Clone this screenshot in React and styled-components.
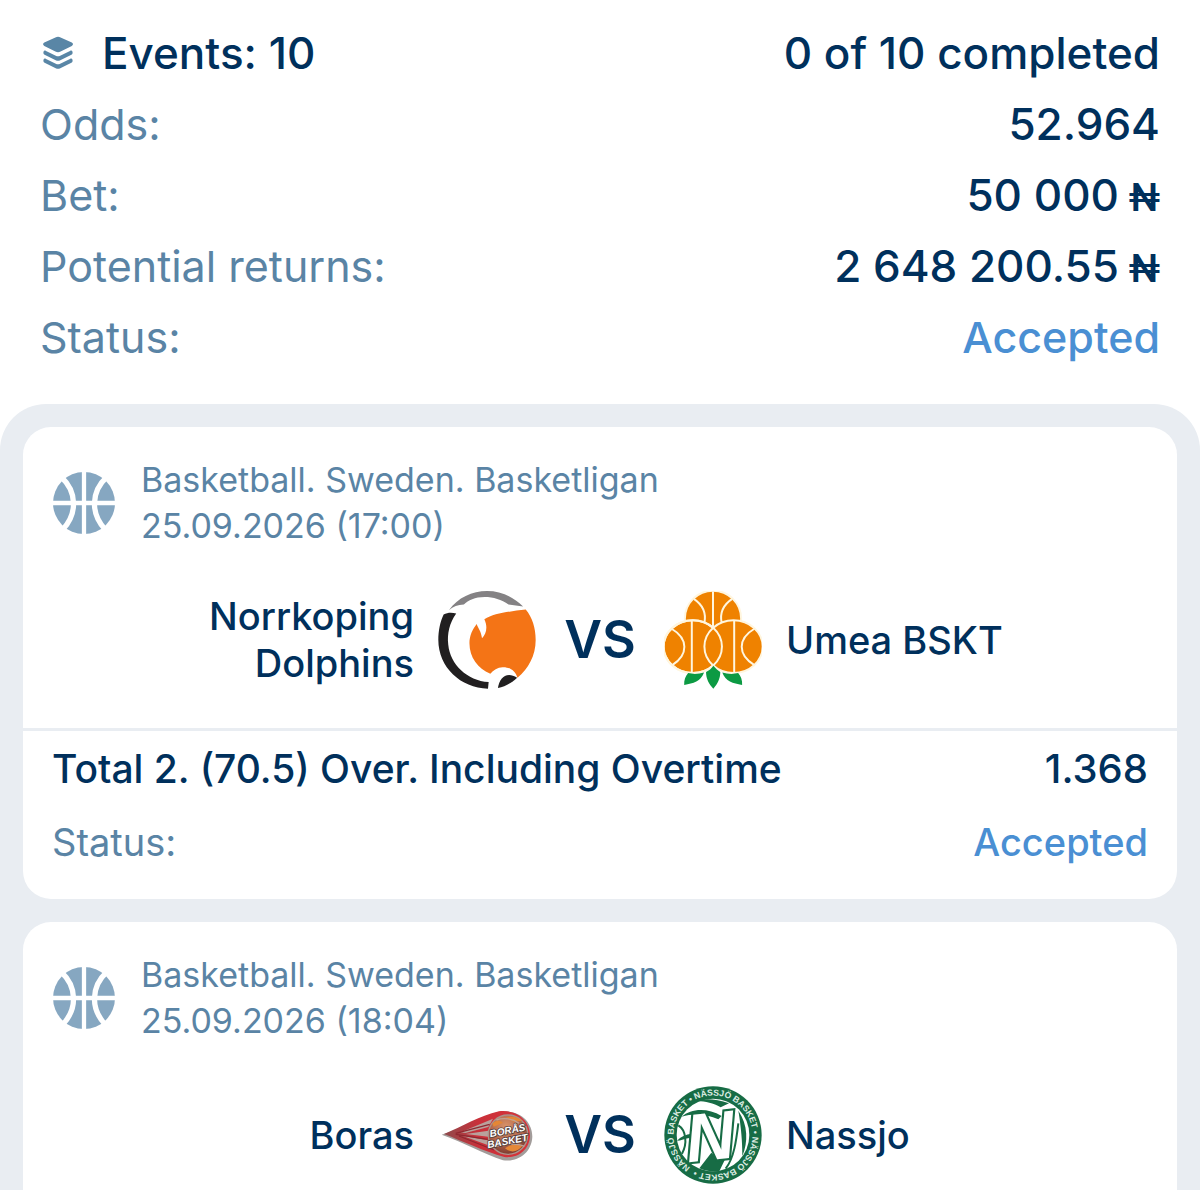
import styled, { createGlobalStyle } from 'styled-components';

const GlobalStyle = createGlobalStyle`
	* {
		box-sizing: border-box;
	}
	body {
		margin: 0;
		background: #ffffff;
		color: #00305c;
		font-family: Inter, 'Liberation Sans', sans-serif;
	}
	h1, h2, p, dl, dt, dd {
		margin: 0;
		font: inherit;
	}
	svg {
		display: block;
		flex: none;
	}
`;

const Page = styled.main`
	overflow: hidden;
	height: 100vh;
`;

const Summary = styled.dl`
	display: flex;
	flex-direction: column;
	gap: 19px;
	padding: 27px 40px 41px;
	font-size: 44px;
	line-height: 52px;
`;

const Row = styled.div`
	display: flex;
	justify-content: space-between;
	align-items: center;
	gap: 20px;
`;

const Label = styled.dt`
	display: flex;
	align-items: center;
	gap: 26px;
	color: ${({ $strong }) => ($strong ? '#00305c' : '#5a84a5')};
	font-size: ${({ $size }) => $size}px;
	font-weight: ${({ $strong }) => ($strong ? 500 : 400)};
`;

const Value = styled.dd`
	color: ${({ $accepted }) => ($accepted ? '#4a8fd3' : '#00305c')};
	font-size: ${({ $size }) => $size}px;
	font-weight: 500;
	text-align: right;
`;

const Currency = styled.span`
	font-family: Roboto, sans-serif;
	font-size: 39px;
	font-weight: 500;
	line-height: 1;
	white-space: pre;
`;

const EventList = styled.section`
	display: flex;
	flex-direction: column;
	gap: 23px;
	padding: 23px;
	border-radius: 46px 46px 0 0;
	background: #e9edf2;
`;

const Card = styled.article`
	border-radius: 28px;
	background: #ffffff;
`;

const CardHeader = styled.header`
	display: flex;
	align-items: center;
	gap: 26px;
	padding: 30px 30px 42px;
	color: #5a84a5;
	font-size: 34px;
	line-height: 46px;
`;

const Match = styled.div`
	display: grid;
	grid-template-columns: minmax(0, 1fr) 98px 128px 98px minmax(0, 1fr);
	align-items: center;
	padding: 0 30px 39px;
`;

const Team = styled.h2`
	padding: 0 24px;
	font-size: 38px;
	font-weight: 500;
	line-height: 47px;
	text-align: ${({ $side }) => ($side === 'home' ? 'right' : 'left')};
`;

const Versus = styled.span`
	font-size: 52px;
	font-weight: 600;
	line-height: 60px;
	text-align: center;
`;

const Outcome = styled.dl`
	display: flex;
	flex-direction: column;
	gap: 21px;
	padding: 12px 29px 31px;
	border-top: 3px solid #e9edf2;
	line-height: 52px;
`;

const LayersIcon = () => (
	<svg width='36' height='36' viewBox='0 0 36 36' fill='#5986a6' aria-hidden='true'>
		<path d='M15.4 2.4C17.200 1.600 18.900 1.600 20.600 2.400L31.800 7.600C33.400 8.400 33.400 10.100 31.800 11L20.600 16.600C18.900 17.500 17.200 17.500 15.400 16.600L4.300 11C2.700 10.100 2.700 8.400 4.300 7.600Z' />
		<path d='M3.600 16.500C3.900 15.500 5 15.400 6 15.900L15.800 20.800C17.300 21.500 18.700 21.500 20.200 20.800L30 15.900C31 15.400 32.100 15.500 32.400 16.500C32.900 18 32.500 19.200 31.400 19.800L20.300 25.200C18.700 26 17.300 26 15.700 25.200L4.600 19.800C3.500 19.200 3.100 18 3.600 16.500Z' />
		<path d='M3.600 24.500C3.900 23.500 5 23.400 6 23.900L15.800 28.800C17.300 29.500 18.700 29.500 20.200 28.800L30 23.900C31 23.400 32.100 23.500 32.400 24.500C32.900 26 32.500 27.200 31.400 27.800L20.300 33.200C18.700 34 17.300 34 15.700 33.200L4.600 27.800C3.500 27.200 3.100 26 3.600 24.500Z' />
	</svg>
);

const BasketballIcon = () => (
	<svg width='62' height='62' viewBox='69 63 188 188' aria-hidden='true'>
		<circle cx='163' cy='157' r='94' fill='#86a7c1' />
		<g fill='none' stroke='#ffffff'>
			<path strokeWidth='13' d='M163 60V255M66 157H260' />
			<path strokeWidth='16' d='M94 78C143 123 143 191 98 238M232 78C183 123 183 191 228 238' />
		</g>
	</svg>
);

const DolphinsLogo = () => (
	<svg width='98' height='98' viewBox='55 60 296 296' role='img' aria-label='Norrkoping Dolphins'>
		<path fill='#848284' d='M88 118C115 80 158 60 203 60C245 60 282 77 312 107L268 101C247 86 222 78 196 78C166 78 147 88 133 101C115 101 101 108 88 118Z' />
		<path fill='#211f20' d='M72 131C84 125 96 125 110 128C90 155 82 190 86 222C92 282 143 330 208 335L206 355C123 353 56 290 56 208C56 179 62 152 72 131Z' />
		<path fill='#f47416' d='M320 116C340 140 350 172 350 208C350 255 328 295 295 322C288 300 270 289 250 290C235 291 222 298 213 310C175 295 150 260 150 218C150 195 160 175 172 160C176 174 185 180 188 203C201 190 206 168 195 145C225 127 270 122 320 116Z' />
		<path fill='#211f20' d='M236 353C240 323 262 301 294 322C277 338 258 348 236 353Z' />
	</svg>
);

const UmeaLogo = () => (
	<svg width='98' height='98' viewBox='73 59 296 296' role='img' aria-label='Umea BSKT'>
		<g fill='#ef8200' stroke='#fff6df' strokeWidth='6'>
			<circle cx='221' cy='143' r='85' />
			<path fill='none' d='M221 60V175M163 83C190 101 201 125 195 155M279 83C252 101 241 125 247 155' />
			<ellipse cx='160' cy='227' rx='88' ry='80' />
			<ellipse cx='283' cy='227' rx='88' ry='80' />
			<ellipse fill='none' cx='160' cy='227' rx='88' ry='80' />
			<path fill='none' d='M157 147V307M285 147V307M96 173C147 203 147 252 98 283M346 173C295 203 295 252 346 283' />
		</g>
		<g fill='#0c9a43'>
			<path d='M222 285C230 294 236 299 243 304C243 323 235 341 222 354C208 341 200 323 200 304C209 299 216 294 222 285Z' />
			<path d='M146 307C162 311 178 310 194 305C184 333 162 337 134 343C133 328 138 316 146 307Z' />
			<path d='M297 307C281 311 265 310 249 305C259 333 281 337 309 343C310 328 305 316 297 307Z' />
		</g>
	</svg>
);

const BorasLogo = () => (
	<svg width='98' height='98' viewBox='57 48 294 294' role='img' aria-label='Boras Basket'>
		<defs>
			<linearGradient id='flame' x1='0' x2='1'>
				<stop offset='0' stopColor='#8f4a4c' />
				<stop offset='0.4' stopColor='#c9303a' />
				<stop offset='1' stopColor='#d8343a' />
			</linearGradient>
			<radialGradient id='ball' cx='0.45' cy='0.3' r='0.75'>
				<stop offset='0' stopColor='#d99469' />
				<stop offset='0.6' stopColor='#ad6148' />
				<stop offset='1' stopColor='#713129' />
			</radialGradient>
		</defs>
		<path fill='#a29c9a' d='M68 194C130 176 180 140 240 125C298 118 340 152 340 200C338 250 294 277 252 271C196 252 132 216 68 194Z' />
		<path fill='url(#flame)' d='M75 192C130 170 180 138 240 124C292 118 334 150 333 198C331 242 294 266 256 261C196 244 132 214 75 192Z' />
		<path fill='#b9a19c' d='M125 187L222 146L208 171L139 189ZM140 192L208 182L207 200ZM130 197L207 211L216 229Z' />
		<path stroke='#8e2830' strokeWidth='4' fill='none' d='M110 190L212 163M110 193L206 208M120 198L225 240' />
		<circle cx='267' cy='194' r='59' fill='url(#ball)' stroke='#a9948c' strokeWidth='4' />
		<path fill='#e48736' d='M220 161C230 150 243 149 252 158L224 170ZM260 144C276 137 297 140 309 152L284 155ZM258 235C277 221 298 221 310 228C296 246 276 250 258 235Z' />
		<path fill='none' stroke='#bfa294' strokeWidth='4' d='M232 150C254 142 282 146 300 160M224 231C260 219 300 221 316 229' />
		<g fill='#ffffff' stroke='#55403d' strokeWidth='5' paintOrder='stroke' fontFamily='"Liberation Sans", sans-serif' fontWeight='700' fontStyle='italic' fontSize='30'>
			<text transform='rotate(-11 214 202)' x='214' y='202'>BORÅS</text>
			<text transform='rotate(-11 207 235)' x='207' y='235'>BASKET</text>
		</g>
	</svg>
);

const NassjoLogo = () => (
	<svg width='98' height='98' viewBox='74 46 294 294' role='img' aria-label='Nassjo Basket'>
		<defs>
			<path id='ring' d='M153 290A118 118 0 0 1 289 96A118 118 0 0 1 153 290' />
		</defs>
		<circle cx='221' cy='193' r='146' fill='#176c45' />
		<circle cx='221' cy='193' r='109' fill='#ffffff' />
		<text fill='#dcebe2' fontFamily='"Liberation Sans", sans-serif' fontWeight='700' fontSize='26'>
			<textPath href='#ring'>NÄSSJÖ BASKET • NÄSSJÖ BASKET • NÄSSJÖ BASKET •</textPath>
		</text>
		<g fill='#176c45'>
			<path d='M127 138C155 113 204 110 247 136L237 146C200 128 160 128 127 138Z' />
			<path d='M161 92C187 84 226 82 269 98L244 110C218 94 190 90 161 92Z' />
			<path d='M297 120C326 162 327 214 309 256C309 213 306 175 297 120Z' />
			<path d='M113 210C124 198 139 191 158 189L154 201C137 203 124 210 113 210Z' />
			<path d='M180 293L216 246L230 260L262 256L240 302C220 304 199 301 180 293Z' />
		</g>
		<path fill='none' stroke='#176c45' strokeWidth='6' d='M117 164C140 178 145 218 128 249M297 158C291 208 284 263 259 294' />
		<text transform='rotate(-6 146 275)' x='146' y='275' fill='#ffffff' stroke='#176c45' strokeWidth='13' paintOrder='stroke' fontFamily='"Liberation Sans", sans-serif' fontWeight='700' fontStyle='italic' fontSize='204'>N</text>
	</svg>
);

const events = [
	{
		league: 'Basketball. Sweden. Basketligan',
		date: '25.09.2026 (17:00)',
		home: 'Norrkoping Dolphins',
		away: 'Umea BSKT',
		HomeLogo: DolphinsLogo,
		AwayLogo: UmeaLogo,
		outcome: 'Total 2. (70.5) Over. Including Overtime',
		odds: '1.368',
	},
	{
		league: 'Basketball. Sweden. Basketligan',
		date: '25.09.2026 (18:04)',
		home: 'Boras',
		away: 'Nassjo',
		HomeLogo: BorasLogo,
		AwayLogo: NassjoLogo,
	},
];

const EventCard = ({ event }) => {
	const { league, date, home, away, HomeLogo, AwayLogo, outcome, odds } = event;
	return (
		<Card>
			<CardHeader>
				<BasketballIcon />
				<div>
					<p>{league}</p>
					<p>{date}</p>
				</div>
			</CardHeader>
			<Match>
				<Team $side='home'>{home}</Team>
				<HomeLogo />
				<Versus>VS</Versus>
				<AwayLogo />
				<Team $side='away'>{away}</Team>
			</Match>
			{outcome && (
				<Outcome>
					<Row>
						<Label $strong $size={39}>{outcome}</Label>
						<Value $size={40}>{odds}</Value>
					</Row>
					<Row>
						<Label $size={38}>Status:</Label>
						<Value $accepted $size={38}>Accepted</Value>
					</Row>
				</Outcome>
			)}
		</Card>
	);
};

const App = () => (
	<Page>
		<GlobalStyle />
		<Summary>
			<Row>
				<Label $strong $size={44}><LayersIcon />Events: 10</Label>
				<Value $size={44}>0 of 10 completed</Value>
			</Row>
			<Row>
				<Label $size={43}>Odds:</Label>
				<Value $size={44}>52.964</Value>
			</Row>
			<Row>
				<Label $size={43}>Bet:</Label>
				<Value $size={44}>50 000<Currency> ₦</Currency></Value>
			</Row>
			<Row>
				<Label $size={43}>Potential returns:</Label>
				<Value $size={44}>2 648 200.55<Currency> ₦</Currency></Value>
			</Row>
			<Row>
				<Label $size={43}>Status:</Label>
				<Value $accepted $size={43}>Accepted</Value>
			</Row>
		</Summary>
		<EventList>
			{events.map((event) => (
				<EventCard key={event.date} event={event} />
			))}
		</EventList>
	</Page>
);

export default App;
